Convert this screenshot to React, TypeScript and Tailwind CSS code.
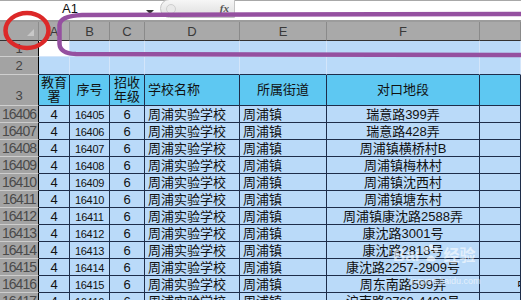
import React from "react";

const font = { fontFamily: '"Liberation Sans", "Noto Sans CJK SC", sans-serif' };

const rows = [
  ["16406", "16405", "瑞意路399弄", ""],
  ["16407", "16406", "瑞意路428弄", ""],
  ["16408", "16407", "周浦镇横桥村B", ""],
  ["16409", "16408", "周浦镇梅林村", ""],
  ["16410", "16409", "周浦镇沈西村", ""],
  ["16411", "16410", "周浦镇塘东村", ""],
  ["16412", "16411", "周浦镇康沈路2588弄", ""],
  ["16413", "16412", "康沈路3001号", ""],
  ["16414", "16413", "康沈路2818号", ""],
  ["16415", "16414", "康沈路2257-2909号", ""],
  ["16416", "16415", "周东南路599弄", "中"],
  ["16417", "16416", "沪南路2760-4400号", ""],
];

const cols = ["A", "B", "C", "D", "E", "F", ""];

export default function App() {
  return (
    <div className="relative w-[521px] h-[300px] overflow-hidden bg-white text-[#111]" style={font}>
      {/* name box + formula bar */}
      <div className="h-[22px] flex items-start border-t border-b-2 border-t-[#a8a8a8] border-b-[#9c9c9c] bg-white">
        <div className="w-[160px] relative h-full">
          <span className="absolute left-[62px] top-[1px] text-[13px] leading-[14px]">A1</span>
          <span className="absolute left-[146px] top-[9px] w-0 h-0 border-l-[4px] border-r-[4px] border-t-[4px] border-l-transparent border-r-transparent border-t-[#333]" />
        </div>
        <div className="w-[75px] h-[19px] -mt-[2px] rounded-l-full rounded-br-[3px] border border-[#c4c4c4] bg-gradient-to-b from-[#f6f6f6] to-[#dedede] flex items-center justify-between pl-[5px] pr-[5px]">
          <span className="w-[10px] h-[10px] rounded-full border border-[#cfcfcf] bg-[#e9e9e9]" />
          <span className="text-[11px] italic font-bold text-[#555] leading-none" style={{ fontFamily: '"Liberation Serif", serif' }}>fx</span>
        </div>
        <div className="flex-1 h-full" />
      </div>

      <div className="grid grid-cols-[39px_31px_40px_35px_95px_87px_153px_41px] text-[13px]">
        {/* column header row */}
        <div className="h-[19px] bg-[#a7a7a7] border-r border-b border-r-[#8c8c8c] border-b-[#333] relative">
          <span className="absolute right-[4px] bottom-[4px] w-[7px] h-[7px] bg-[#c8c8c8] [clip-path:polygon(100%_0,100%_100%,0_100%)]" />
        </div>
        {cols.map((c, i) => (
          <div key={i} className="h-[19px] bg-[#a9a9a9] border-r border-b border-r-[#8a8a8a] border-b-[#333] flex items-center justify-center text-[#3a3a3a] text-[13px] leading-none">
            {c}
          </div>
        ))}

        {/* row 1 */}
        <div className="h-[16px] bg-[#a3a3a3] border-r border-b border-r-black border-b-[#cfcfcf] flex items-center justify-center text-[#444] text-[13px]">1</div>
        <div className="h-[16px] bg-white border-r border-b border-[#d5e6fa]" />
        {[0, 1, 2, 3, 4, 5].map((i) => (
          <div key={i} className="h-[16px] bg-[#badaf9] border-r border-b border-[#d3e5fa]" />
        ))}

        {/* row 2 */}
        <div className="h-[18px] bg-[#a3a3a3] border-r border-b border-r-black border-b-[#cfcfcf] flex items-center justify-center text-[#444] text-[13px]">2</div>
        {[0, 1, 2, 3, 4, 5, 6].map((i) => (
          <div key={i} className="h-[18px] bg-[#badaf9] border-r border-b border-r-[#d3e5fa] border-b-[#1e2d4a]" />
        ))}

        {/* row 3: headers */}
        <div className="h-[31px] bg-[#a3a3a3] border-r border-b border-r-black border-b-[#cfcfcf] flex items-end justify-center text-[#444] text-[13px] leading-[14px] pb-[2px]">3</div>
        <div className="h-[31px] bg-[#5ec8f2] border-r border-b border-[#1e2d4a] flex items-center justify-center text-center text-[13px] leading-[14px]">教育<br />署</div>
        <div className="h-[31px] bg-[#5ec8f2] border-r border-b border-[#1e2d4a] flex items-center justify-center text-[13px]">序号</div>
        <div className="h-[31px] bg-[#5ec8f2] border-r border-b border-[#1e2d4a] flex items-center justify-center text-center text-[13px] leading-[14px]">招收<br />年级</div>
        <div className="h-[31px] bg-[#5ec8f2] border-r border-b border-[#1e2d4a] flex items-center pl-[3px] text-[13px]">学校名称</div>
        <div className="h-[31px] bg-[#5ec8f2] border-r border-b border-[#1e2d4a] flex items-center justify-center text-[13px]">所属街道</div>
        <div className="h-[31px] bg-[#5ec8f2] border-r border-b border-[#1e2d4a] flex items-center justify-center text-[13px]">对口地段</div>
        <div className="h-[31px] bg-[#5ec8f2] border-r border-b border-[#1e2d4a]" />

        {/* data rows */}
        {rows.map(([n, id, addr, g]) => (
          <React.Fragment key={n}>
            <div className="h-[17px] bg-[#a3a3a3] border-r border-b border-r-black border-b-[#cdcdcd] flex items-center justify-center text-[#4a4a4a] text-[14px] tracking-[-1px] leading-none">{n}</div>
            <div className="h-[17px] bg-[#badaf9] border-r border-b border-[#1e2d4a] flex items-center justify-center text-[13px] leading-none">4</div>
            <div className="h-[17px] bg-[#badaf9] border-r border-b border-[#1e2d4a] flex items-end justify-center pb-[1px] text-[11px] tracking-[-0.3px] leading-none">{id}</div>
            <div className="h-[17px] bg-[#badaf9] border-r border-b border-[#1e2d4a] flex items-center justify-center text-[13px] leading-none">6</div>
            <div className="h-[17px] bg-[#badaf9] border-r border-b border-[#1e2d4a] flex items-center pl-[3px] text-[13px] leading-none whitespace-nowrap">周浦实验学校</div>
            <div className="h-[17px] bg-[#badaf9] border-r border-b border-[#1e2d4a] flex items-center pl-[3px] text-[13px] leading-none whitespace-nowrap">周浦镇</div>
            <div className="h-[17px] bg-[#badaf9] border-r border-b border-[#1e2d4a] flex items-center justify-center text-[13px] leading-none whitespace-nowrap overflow-hidden">{addr}</div>
            <div className="h-[17px] bg-[#badaf9] border-r border-b border-[#1e2d4a] flex items-center pl-[37px] text-[13px] leading-none whitespace-nowrap overflow-hidden">{g}</div>
          </React.Fragment>
        ))}
      </div>

      {/* watermark */}
      <div className="absolute left-[393px] top-[244px] flex items-end gap-[3px] text-white/60 pointer-events-none">
        <span className="text-[17px] font-bold leading-none">Bai</span>
        <svg width="18" height="20" viewBox="0 0 18 20" className="opacity-60">
          <ellipse cx="4" cy="6" rx="2.2" ry="3" fill="#fff" />
          <ellipse cx="9" cy="3" rx="2.2" ry="3" fill="#fff" />
          <ellipse cx="14" cy="6" rx="2.2" ry="3" fill="#fff" />
          <path d="M4 16 Q9 7 14 16 Q9 19 4 16Z" fill="#fff" />
        </svg>
        <span className="text-[16px] font-bold leading-none">经验</span>
      </div>
      <div className="absolute left-[408px] top-[277px] text-[9px] leading-none text-white/60 pointer-events-none">jingyan.baidu.com</div>

      {/* annotations */}
      <svg className="absolute left-0 top-0 pointer-events-none" width="521" height="300" viewBox="0 0 521 300">
        <path d="M 524 14 L 82 15 Q 60 16 59.5 25 L 59.5 44 Q 60 53.5 76 54 L 524 55" fill="none" stroke="#9550a0" strokeWidth="4.5" />
        <ellipse cx="27" cy="30.5" rx="21.5" ry="17.5" fill="none" stroke="#dc2828" strokeWidth="4.5" />
      </svg>
    </div>
  );
}
